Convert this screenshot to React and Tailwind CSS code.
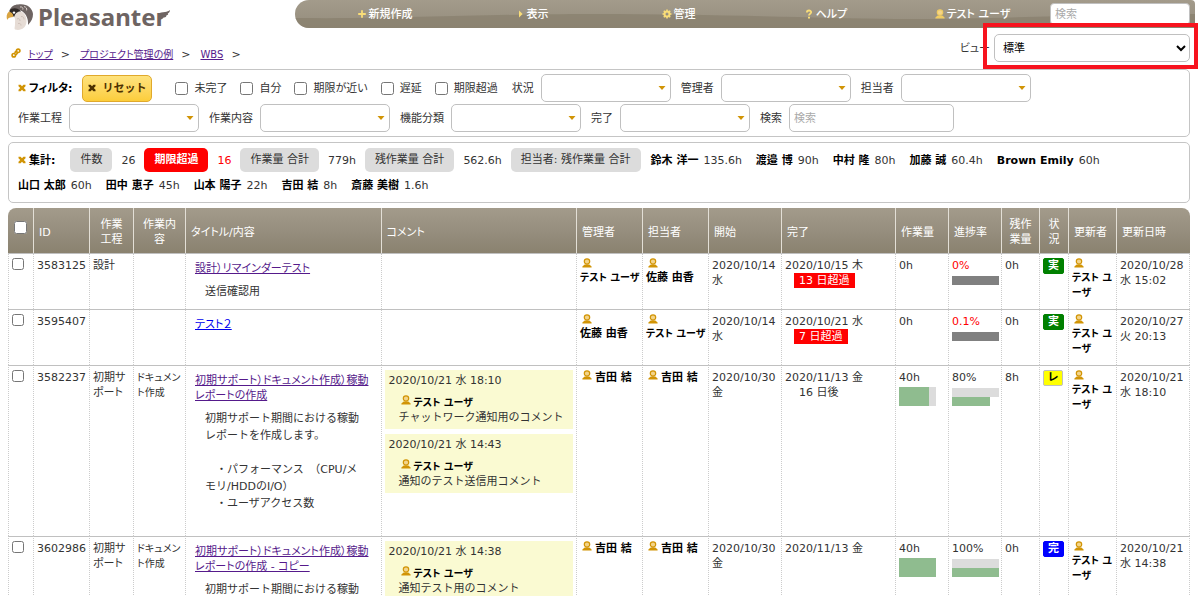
import { useState } from "react";
import clsx from "clsx";

const crumbs = ["トップ", "プロジェクト管理の例", "WBS"];

const menus = [
    { label: "新規作成", icon: "plus" },
    { label: "表示", icon: "arrow" },
    { label: "管理", icon: "gear" },
    { label: "ヘルプ", icon: "help" },
    { label: "テスト ユーザ", icon: "person" },
];

const checks = ["未完了", "自分", "期限が近い", "遅延", "期限超過"];

const totals = [
    { label: "件数", value: "26" },
    { label: "期限超過", value: "16", overdue: true },
    { label: "作業量 合計", value: "779h" },
    { label: "残作業量 合計", value: "562.6h" },
];

const owners = [
    ["鈴木 洋一", "135.6h"],
    ["渡邉 博", "90h"],
    ["中村 隆", "80h"],
    ["加藤 誠", "60.4h"],
    ["Brown Emily", "60h"],
];

const moreOwners = [
    ["山口 太郎", "60h"],
    ["田中 恵子", "45h"],
    ["山本 陽子", "22h"],
    ["吉田 結", "8h"],
    ["斎藤 美樹", "1.6h"],
];

const columns = [
    { label: "ID", style: "w-[56px] px-[5px] text-left" },
    { label: "作業工程", style: "w-[44px] px-2 text-center" },
    { label: "作業内容", style: "w-[52px] px-2 text-center" },
    { label: "タイトル/内容", style: "px-[5px] text-left" },
    { label: "コメント", style: "px-[5px] text-left" },
    { label: "管理者", style: "w-[66px] px-[5px] text-left" },
    { label: "担当者", style: "w-[66px] px-[5px] text-left" },
    { label: "開始", style: "w-[73px] px-[5px] text-left" },
    { label: "完了", style: "w-[114px] px-[5px] text-left" },
    { label: "作業量", style: "w-[53px] px-[5px] text-left" },
    { label: "進捗率", style: "w-[53px] px-[5px] text-left" },
    { label: "残作業量", style: "w-[38px] px-[5px] text-center" },
    { label: "状況", style: "w-[29px] px-[5px] text-center" },
    { label: "更新者", style: "w-[48px] px-[5px] text-left" },
    { label: "更新日時", style: "w-[74px] px-[5px] text-left" },
];

const longBody = "初期サポート期間における稼動\nレポートを作成します。\n\n　・パフォーマンス　（CPU/メ\nモリ/HDDのI/O）\n　・ユーザアクセス数\n ";

const rows = [
    {
        id: "3583125", process: "設計", content: "", title: "設計）リマインダーテスト", visited: true, body: "送信確認用", comments: [],
        manager: "テスト ユーザ", owner: "佐藤 由香", stacked: true, start: "2020/10/14 水", end: "2020/10/15 木", limit: "13 日超過", late: true,
        work: "0h", rate: 0, rateText: "0%", remaining: "0h", status: "実", updated: "2020/10/28 水 15:02",
    },
    {
        id: "3595407", process: "", content: "", title: "テスト２", visited: false, body: "", comments: [],
        manager: "佐藤 由香", owner: "テスト ユーザ", stacked: true, start: "2020/10/14 水", end: "2020/10/21 水", limit: "7 日超過", late: true,
        work: "0h", rate: 0, rateText: "0.1%", remaining: "0h", status: "実", updated: "2020/10/27 火 20:13",
    },
    {
        id: "3582237", process: "初期サポート", content: "ドキュメント作成", title: "初期サポート）ドキュメント作成）稼動レポートの作成", visited: true, body: longBody,
        comments: [
            { date: "2020/10/21 水 18:10", text: "チャットワーク通知用のコメント" },
            { date: "2020/10/21 水 14:43", text: "通知のテスト送信用コメント" },
        ],
        manager: "吉田 結", owner: "吉田 結", start: "2020/10/30 金", end: "2020/11/13 金", limit: "16 日後",
        work: "40h", rate: 80, rateText: "80%", remaining: "8h", status: "レ", updated: "2020/10/21 水 18:10",
    },
    {
        id: "3602986", process: "初期サポート", content: "ドキュメント作成", title: "初期サポート）ドキュメント作成）稼動レポートの作成 - コピー", visited: true, body: longBody,
        comments: [{ date: "2020/10/21 水 14:38", text: "通知テスト用のコメント" }],
        manager: "吉田 結", owner: "吉田 結", start: "2020/10/30 金", end: "2020/11/13 金", limit: "",
        work: "40h", rate: 100, rateText: "100%", remaining: "0h", status: "完", updated: "2020/10/21 水 14:38",
    },
];

const statusStyles = {
    "実": "border-[#008000] bg-[#008000] text-white",
    "レ": "border-[#c0c0c0] bg-[#ffff00] text-black",
    "完": "border-[#0000ff] bg-[#0000ff] text-white",
};

const PersonIcon = ({ className }) => (
    <svg viewBox="0 0 10 10" className={clsx("inline-block size-[10px] shrink-0", className)} aria-hidden="true">
        <circle cx="5" cy="3.5" r="2.7" fill="#f3d48a" stroke="currentColor" strokeWidth="1.2" />
        <path d="M0.4 9.6V8.4L2.6 6.6H7.4L9.6 8.4V9.6Z" fill="currentColor" />
    </svg>
);

const CloseIcon = ({ className }) => (
    <svg viewBox="0 0 8 8" className={clsx("size-[8px] shrink-0", className)} aria-hidden="true">
        <path d="M0.5 0.8H2.6L4 2.3L5.4 0.8H7.5V2.2L5.8 4L7.5 5.8V7.2H5.4L4 5.7L2.6 7.2H0.5V5.8L2.2 4L0.5 2.2Z" fill="currentColor" />
    </svg>
);

const MenuIcon = ({ name }) => {
    if (name === "person") return <PersonIcon className="text-[#f0cc62]" />;
    return (
        <svg viewBox="0 0 10 10" className="size-[10px] shrink-0 text-[#f9dd78]" fill="none" stroke="currentColor" aria-hidden="true">
            {name === "plus" && <path d="M5 1.2V8.8M1.2 5H8.8" strokeWidth="1.8" />}
            {name === "arrow" && <path d="M4 1.5V8.5L7.6 5Z" fill="currentColor" stroke="none" />}
            {name === "gear" && (
                <>
                    <circle cx="5" cy="5" r="2.5" strokeWidth="2" />
                    <path d="M5 0.5V2M5 8V9.5M0.5 5H2M8 5H9.5M1.8 1.8L2.9 2.9M7.1 7.1L8.2 8.2M8.2 1.8L7.1 2.9M2.9 7.1L1.8 8.2" strokeWidth="1.6" />
                </>
            )}
            {name === "help" && (
                <>
                    <path d="M2.9 3.4C2.9 0.9 7.2 0.9 7.2 3.3C7.2 4.8 5 4.6 5 6.5" strokeWidth="1.8" />
                    <path d="M4 7.8H6V9.6H4Z" fill="currentColor" stroke="none" />
                </>
            )}
        </svg>
    );
};

const Logo = () => (
    <a href="#" className="flex items-center pl-[6px] text-[#6e6462]" aria-label="Pleasanter">
        <svg viewBox="0 0 28 28" className="size-[28px]" aria-hidden="true">
            <path d="M7 13C10 15 9 18 9 21C9 24 8 25.5 9 26.5C15 28 20 25 20.5 19C21 13 18 9 13 8Z" fill="#e6dcd5" />
            <path d="M3.5 7.5C5 3.5 8.5 1.5 12 1.5C20 0 26.5 4.5 27 11C27 15 25.5 18.5 22 22C22.5 16 20.5 11.5 16.5 8.5C12 6 7 5.5 3.5 7.5Z" fill="#6e6462" />
            <path d="M3.5 7.5C6 4.5 12 4.5 15 8.5C11.5 8 9 10.5 8.5 13.5C6 13.5 3 11 3.5 7.5Z" fill="#2f2927" />
            <path d="M3 8.5C0.5 10.5 0 14.5 1.4 17C2.2 14.5 4.4 14.6 7 14C8 11.6 6 9.5 3 8.5Z" fill="#d9a441" />
            <circle cx="8" cy="9.6" r="1.2" fill="#fff" />
            <path d="M14 4C16 3.4 17.4 5 16.8 6.6M18 3.6C20 3.8 21.2 5.6 20.6 7.4" fill="none" stroke="#d9cfca" strokeWidth="1" />
            <path d="M11 16C13 15 14 16 14 18M15 13.5C17 13.2 18 14.6 18 16.4M12 20.5C14 20 15 21 15 22.6" fill="none" stroke="#c9bab2" strokeWidth="0.8" />
        </svg>
        <span className="relative ml-[4px] pr-[4px] font-['Noto_Sans',sans-serif] text-[24px] leading-[34px] font-bold">
            Pleasanter
            <svg viewBox="0 0 12 12" className="absolute top-[10px] right-0 size-[12px]" aria-hidden="true">
                <path d="M0 4C2 2.2 4.5 2.6 7 2C9 1.6 10.8 1.2 12 0C12 1.8 11 3 9.6 3.6C10.6 3.8 10.4 5.2 8.2 5.6C8.8 6.4 7.6 7.6 5.6 7.4C5 9 2.4 9.4 0 11Z" fill="currentColor" />
            </svg>
        </span>
    </a>
);

const FilterSelect = ({ label }) => (
    <label className="flex items-center gap-[7px]">
        {label}
        <span className="relative">
            <select className="h-[28px] w-[130px] appearance-none rounded-[5px] border border-[#c0c0c0] bg-white px-2" defaultValue="">
                <option value=""></option>
            </select>
            <svg viewBox="0 0 8 4" className="pointer-events-none absolute top-[12px] right-[5px] h-[4px] w-[8px]" aria-hidden="true">
                <path d="M0.5 0H7.5L4 4Z" fill="#d19405" />
            </svg>
        </span>
    </label>
);

const OwnerTotal = ({ name, value }) => (
    <span className="flex items-baseline gap-[5px]">
        <b className="text-black">{name}</b>
        {value}
    </span>
);

// Long names use a smaller size so that they fit in the user columns
const UserName = ({ name, stacked, wrap }) => {
    const size = name.length > 6 ? "text-[10px]" : "text-[11px]";
    return stacked ? (
        <div className={clsx("flex flex-col font-bold text-black", size)}>
            <PersonIcon className="mb-[2px] ml-[2px] text-[#d19405]" />
            <span className={wrap ? "break-all [line-break:anywhere]" : "whitespace-nowrap"}>{name}</span>
        </div>
    ) : (
        <div className={clsx("flex gap-[3px] pl-[2px] font-bold whitespace-nowrap text-black", size)}>
            <PersonIcon className="text-[#d19405]" />
            {name}
        </div>
    );
};

const Comment = ({ date, text }) => (
    <div className="bg-[#fafad2] pt-[3px] pr-1 pb-[4px] pl-[4px]">
        <p>{date}</p>
        <div className="mt-[7px] pl-[10px]">
            <UserName name="テスト ユーザ" />
            <p className="whitespace-nowrap [font-feature-settings:normal]">{text}</p>
        </div>
    </div>
);

const WorkBar = ({ rate }) => (
    <div className="mt-[2px] h-[19px] w-[37px] bg-[#dcdcdc]">
        <div className="h-full bg-[#8fbc8f]" style={{ width: `${rate}%` }} />
    </div>
);

const RateBar = ({ rate }) => (
    <div className="mt-[3px] w-[47px]">
        <div className={clsx("h-[9px]", rate ? "bg-[#dcdcdc]" : "bg-[#808080]")} />
        {rate > 0 && <div className="h-[9px] bg-[#8fbc8f]" style={{ width: `${rate}%` }} />}
    </div>
);

const Row = ({ row }) => {
    const cell = "border-t border-l border-t-[#c0c0c0] border-l-[#ccc] [border-left-style:dotted] pt-[4px] pl-[3px] align-top last:border-r last:border-r-[#ccc] last:[border-right-style:dotted]";
    return (
        <tr className="h-[56px]">
            <td className={cell}>
                <input type="checkbox" aria-label={row.id} className="block size-[12px]" />
            </td>
            <td className={cell}>{row.id}</td>
            <td className={cell}>{row.process}</td>
            <td className={clsx(cell, "text-[10px]")}>{row.content}</td>
            <td className={clsx(cell, "pt-[7px] pr-[10px] pb-[7px] pl-[9px]")}>
                <a href="#" className={clsx("block w-fit underline", row.visited ? "text-[#551a8b]" : "text-[#0000ee]")}>{row.title}</a>
                {row.body && (
                    <p className="mt-[7px] pl-[10px] leading-[17px] whitespace-pre [font-feature-settings:normal]">{row.body}</p>
                )}
            </td>
            <td className={cell}>
                <div className="flex flex-col gap-[5px] pr-[3px]">
                    {row.comments.map((comment) => <Comment key={comment.date} {...comment} />)}
                </div>
            </td>
            <td className={cell}><UserName name={row.manager} stacked={row.stacked} /></td>
            <td className={cell}><UserName name={row.owner} stacked={row.stacked} /></td>
            <td className={cell}>{row.start}</td>
            <td className={cell}>
                {row.end}
                {row.limit && (
                    <p className={clsx("ml-[9px] w-fit px-[5px]", row.late && "bg-[#ff0000] text-white")}>{row.limit}</p>
                )}
            </td>
            <td className={cell}>
                {row.work}
                {row.rate > 0 && <WorkBar rate={row.rate} />}
            </td>
            <td className={cell}>
                <span className={clsx(row.late && "text-[#ff0000]")}>{row.rateText}</span>
                <RateBar rate={row.rate} />
            </td>
            <td className={cell}>{row.remaining}</td>
            <td className={cell}>
                <span className={clsx("inline-block rounded-[2px] border px-[4px] leading-[14px] font-bold", statusStyles[row.status])}>{row.status}</span>
            </td>
            <td className={cell}><UserName name="テスト ユーザ" stacked wrap /></td>
            <td className={cell}>{row.updated}</td>
        </tr>
    );
};

export default function App() {
    const [keyword, setKeyword] = useState("");
    const [search, setSearch] = useState("");
    const [view, setView] = useState("標準");

    return (
        <div className="h-screen overflow-hidden bg-white font-['DejaVu_Sans','Noto_Sans_CJK_JP',sans-serif] text-[11px] leading-[15px] text-[#333] [font-feature-settings:'palt']">
            <header className="flex h-[28px] items-start">
                <div className="w-[295px] shrink-0"><Logo /></div>
                <nav className="relative mr-[5px] flex h-[28px] flex-1 items-center overflow-hidden rounded-l-[14px] rounded-tr-[4px] bg-linear-to-b from-[#a39b8b] to-[#958d7d] pr-[5px] pl-4">
                    <svg viewBox="0 0 900 28" preserveAspectRatio="none" className="absolute inset-0 size-full" aria-hidden="true">
                        <path d="M0 18C120 19 180 14 300 14S520 18 600 19S780 14 900 14V28H0Z" fill="#877f6c" fillOpacity="0.7" />
                    </svg>
                    <ul className="relative flex flex-1">
                        {menus.map((menu) => (
                            <li key={menu.label} className="flex-1">
                                <button type="button" className="flex w-full items-center justify-center gap-[2px] font-medium text-white">
                                    <MenuIcon name={menu.icon} />
                                    {menu.label}
                                </button>
                            </li>
                        ))}
                    </ul>
                    <input
                        type="search"
                        aria-label="検索"
                        placeholder="検索"
                        value={keyword}
                        onChange={(e) => setKeyword(e.target.value)}
                        className="relative ml-1 h-[22px] w-[140px] rounded-[4px] border border-[#c0c0c0] bg-white px-[4px] placeholder:text-[#aaa]"
                    />
                </nav>
            </header>

            <main className="pr-[10px] pl-2">
                <div className="flex h-[41px] items-start justify-between">
                    {/* Breadcrumb */}
                    <ol className="flex items-center pt-[19px] pl-[3px]">
                        <li className="mr-[7px] pb-[4px]">
                            <svg viewBox="0 0 10 10" className="block size-[10px]" fill="none" stroke="#d19405" strokeWidth="1.7" aria-hidden="true">
                                <circle cx="7.2" cy="2.8" r="1.7" />
                                <circle cx="2.8" cy="7.2" r="1.7" />
                                <path d="M3.6 4.8L5.2 3.2M4.8 6.8L6.6 5" />
                            </svg>
                        </li>
                        {crumbs.map((crumb) => (
                            <li key={crumb} className="flex">
                                <a href="#" className="text-[10px] text-[#551a8b] underline">{crumb}</a>
                                <span className="mr-[10px] ml-[8px]">&gt;</span>
                            </li>
                        ))}
                    </ol>
                    {/* View selector */}
                    <div className="flex items-center gap-[4px] pt-[6px]">
                        <label htmlFor="view">ビュー</label>
                        <div className="relative">
                            <select
                                id="view"
                                value={view}
                                onChange={(e) => setView(e.target.value)}
                                className="block h-[28px] w-[196px] rounded-[5px] border border-[#c0c0c0] bg-white px-[4px] text-black"
                            >
                                <option>標準</option>
                            </select>
                            <div className="pointer-events-none absolute -top-[11px] -right-[8px] -bottom-[7px] -left-[11px] border-4 border-[#f7131e]" />
                        </div>
                    </div>
                </div>

                {/* Filters */}
                <section className="flex flex-col gap-[2px] rounded-[5px] border border-[#c5c5c5] py-[4px] pr-2 pl-[9px]">
                    <div className="flex items-center">
                        <h2 className="flex items-center gap-[3px] font-bold text-black">
                            <CloseIcon className="text-[#d19405]" />
                            フィルタ:
                        </h2>
                        <button type="button" className="ml-[10px] flex h-[27px] w-[70px] items-center justify-center gap-[6px] rounded-[5px] border border-[#e0a92c] bg-linear-to-b from-[#fee27c] to-[#fccd3a] font-bold text-[#4c3000] [font-feature-settings:normal]">
                            <CloseIcon className="text-[#4c3000]" />
                            リセット
                        </button>
                        <div className="ml-[23px] flex gap-[13px]">
                            {checks.map((check) => (
                                <label key={check} className="flex items-center gap-[6px]">
                                    <input type="checkbox" className="size-[13px]" />
                                    {check}
                                </label>
                            ))}
                        </div>
                        <div className="ml-[14px] flex gap-[10px]">
                            <FilterSelect label="状況" />
                            <FilterSelect label="管理者" />
                            <FilterSelect label="担当者" />
                        </div>
                    </div>
                    <div className="flex items-center gap-[10px]">
                        <FilterSelect label="作業工程" />
                        <FilterSelect label="作業内容" />
                        <FilterSelect label="機能分類" />
                        <FilterSelect label="完了" />
                        <label className="flex items-center gap-[7px]">
                            検索
                            <input
                                type="text"
                                placeholder="検索"
                                value={search}
                                onChange={(e) => setSearch(e.target.value)}
                                className="h-[28px] w-[165px] rounded-[5px] border border-[#c0c0c0] bg-white px-[4px] placeholder:text-[#aaa]"
                            />
                        </label>
                    </div>
                </section>

                {/* Aggregations */}
                <section className="mt-[5px] rounded-[5px] border border-[#c5c5c5] pt-[5px] pr-2 pb-[9px] pl-[9px]">
                    <div className="flex items-center whitespace-nowrap">
                        <h2 className="mr-[15px] flex items-center gap-[3px] font-bold text-black">
                            <CloseIcon className="text-[#d19405]" />
                            集計:
                        </h2>
                        {totals.map((total) => (
                            <span key={total.label} className="mr-[9px] flex items-center gap-[9px]">
                                <span className={clsx("rounded-[5px] px-[10px] leading-[24px]", total.overdue ? "bg-[#ff0000] font-bold text-white" : "bg-[#dcdcdc]")}>{total.label}</span>
                                <span className={clsx(total.overdue && "text-[#ff0000]")}>{total.value}</span>
                            </span>
                        ))}
                        <span className="mr-[10px] rounded-[5px] bg-[#dcdcdc] px-[10px] leading-[24px]">担当者: 残作業量 合計</span>
                        <div className="flex gap-[14px]">
                            {owners.map(([name, value]) => <OwnerTotal key={name} name={name} value={value} />)}
                        </div>
                    </div>
                    <div className="mt-[6px] flex gap-[14px]">
                        {moreOwners.map(([name, value]) => <OwnerTotal key={name} name={name} value={value} />)}
                    </div>
                </section>

                {/* Records */}
                <table className="mt-[5px] w-full table-fixed border-separate border-spacing-0">
                    <thead>
                        <tr className="h-[45px] text-white">
                            <th className="w-[25px] rounded-tl-[8px] bg-linear-to-b from-[#a39b8b] from-0% via-[#958d7d] via-55% to-[#8a826f] pl-[6px] align-middle">
                                <input type="checkbox" aria-label="すべて選択" className="mb-[6px] block size-[13px]" />
                            </th>
                            {columns.map((column) => (
                                <th
                                    key={column.label}
                                    className={clsx(
                                        "border-l border-[#e3dfd6] bg-linear-to-b from-[#a39b8b] from-0% via-[#958d7d] via-55% to-[#8a826f] pt-[3px] font-normal last:rounded-tr-[8px]",
                                        column.style
                                    )}
                                >
                                    {column.label}
                                </th>
                            ))}
                        </tr>
                    </thead>
                    <tbody>
                        {rows.map((row) => <Row key={row.id} row={row} />)}
                    </tbody>
                </table>
            </main>
        </div>
    );
}
